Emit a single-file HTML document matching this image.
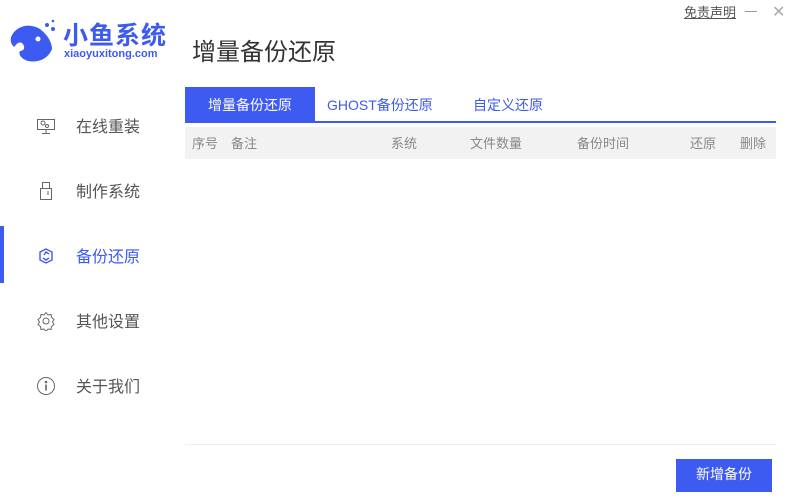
<!DOCTYPE html><html><head><meta charset="utf-8"><style>
*{margin:0;padding:0;box-sizing:border-box}
body{width:789px;height:500px;background:#fff;position:relative;overflow:hidden;font-family:"Liberation Sans","Noto Sans CJK SC",sans-serif;color:#555}
.a{position:absolute;white-space:nowrap}
.nav{font-size:16px;color:#555}
.th{font-size:13px;color:#888;top:133px}
</style></head><body>
<svg class="a" style="left:8px;top:17px" width="50" height="50" viewBox="0 0 50 50"><path d="M4 18 C10 8 22 6 32 12 C40 18 44 26 44 32 C40 42 30 46 20 44 C14 42 10 38 12 34 C16 34 18 30 14 26 C10 24 8 28 6 30 C2 26 2 22 4 18Z" fill="#3d5af1"/><circle cx="39" cy="8" r="2" fill="#3d5af1"/><circle cx="45" cy="12" r="2" fill="#3d5af1"/><circle cx="45" cy="4" r="1.3" fill="#3d5af1"/><circle cx="30" cy="22" r="2.5" fill="#fff"/></svg>
<div class="a" style="left:63px;top:16px;font-size:25px;font-weight:bold;color:#3d5af1;letter-spacing:1px">小鱼系统</div>
<div class="a" style="left:64px;top:48px;font-size:11px;font-weight:bold;color:#3d5af1">xiaoyuxitong.com</div>
<div class="a" style="left:192px;top:32px;font-size:24px;color:#333">增量备份还原</div>
<div class="a" style="left:684px;top:2px;font-size:13px;color:#555;text-decoration:underline">免责声明</div>
<div class="a" style="left:745px;top:11px;width:12px;height:1px;background:#999"></div>
<div class="a" style="left:772px;top:2px;font-size:16px;color:#aaa">✕</div>
<div class="a" style="left:0;top:226px;width:4px;height:57px;background:#3d5af1"></div>
<svg class="a" style="left:36px;top:116px" width="20" height="20" viewBox="0 0 20 20" fill="none" stroke="#666"><rect x="1.5" y="3.5" width="17" height="10"/><circle cx="7" cy="7" r="2"/><circle cx="11" cy="10" r="1.5"/><path d="M10 14v3M6 17.5h8"/></svg>
<div class="a nav" style="left:76px;top:113px">在线重装</div>
<svg class="a" style="left:38px;top:181px" width="16" height="20" viewBox="0 0 16 20" fill="none" stroke="#666"><rect x="4.5" y="1.5" width="7" height="6"/><rect x="2.5" y="7.5" width="11" height="11"/><path d="M10 10v4"/></svg>
<div class="a nav" style="left:76px;top:178px">制作系统</div>
<svg class="a" style="left:36px;top:246px" width="20" height="20" viewBox="0 0 20 20" fill="none" stroke="#3d5af1" stroke-width="1.4"><path d="M4 6l6-3 6 3v8l-6 3-6-3z"/><path d="M8 9l2-3 3 2M7 12l3 2 3-2"/></svg>
<div class="a nav" style="left:76px;top:243px;color:#3d5af1">备份还原</div>
<svg class="a" style="left:36px;top:311px" width="20" height="20" viewBox="0 0 20 20" fill="none" stroke="#666"><path d="M10 1.5l2 2.5 3-.5.5 3 2.5 2-1.5 2.5 1.5 2.5-2.5 2-.5 3-3-.5-2 2.5-2-2.5-3 .5-.5-3-2.5-2L3.5 11 2 8.5l2.5-2 .5-3 3 .5z"/><circle cx="10" cy="10" r="3"/></svg>
<div class="a nav" style="left:76px;top:308px">其他设置</div>
<svg class="a" style="left:36px;top:376px" width="20" height="20" viewBox="0 0 20 20" fill="none" stroke="#666"><circle cx="10" cy="10" r="8.5"/><path d="M10 8.5v6" stroke-width="1.6"/><circle cx="10" cy="6" r=".8" fill="#666"/></svg>
<div class="a nav" style="left:76px;top:373px">关于我们</div>
<div class="a" style="left:185px;top:87px;width:130px;height:35px;background:#3d5af1"></div>
<div class="a" style="left:185px;top:121px;width:591px;height:2px;background:#3d5af1"></div>
<div class="a" style="left:208px;top:95px;font-size:14px;color:#fff">增量备份还原</div>
<div class="a" style="left:327px;top:95px;font-size:14px;color:#3d5af1">GHOST备份还原</div>
<div class="a" style="left:473px;top:95px;font-size:14px;color:#3d5af1">自定义还原</div>
<div class="a" style="left:185px;top:127px;width:591px;height:32px;background:#f2f2f2"></div>
<div class="a th" style="left:192px">序号</div>
<div class="a th" style="left:231px">备注</div>
<div class="a th" style="left:391px">系统</div>
<div class="a th" style="left:470px">文件数量</div>
<div class="a th" style="left:577px">备份时间</div>
<div class="a th" style="left:690px">还原</div>
<div class="a th" style="left:740px">删除</div>
<div class="a" style="left:185px;top:444px;width:591px;height:1px;background:#eee"></div>
<div class="a" style="left:676px;top:459px;width:96px;height:33px;background:#3d5af1;color:#fff;font-size:14px;text-align:center;line-height:31px">新增备份</div>
</body></html>
